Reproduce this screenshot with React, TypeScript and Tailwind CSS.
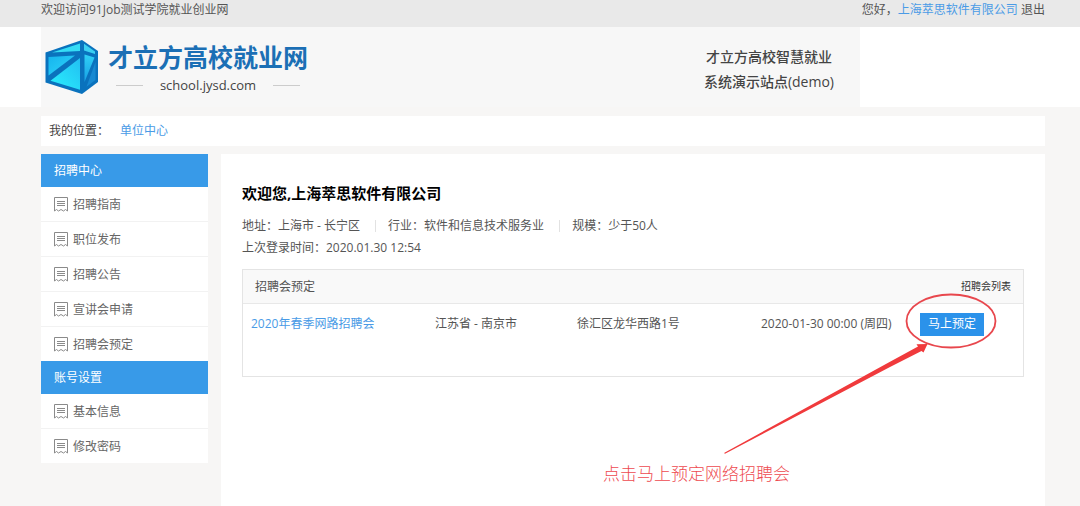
import React from "react";

interface MenuGroup {
  title: string;
  items: string[];
}

interface Fair {
  name: string;
  city: string;
  address: string;
  time: string;
}

const company = "上海萃思软件有限公司";

const menu: MenuGroup[] = [
  { title: "招聘中心", items: ["招聘指南", "职位发布", "招聘公告", "宣讲会申请", "招聘会预定"] },
  { title: "账号设置", items: ["基本信息", "修改密码"] },
];

const fairs: Fair[] = [
  {
    name: "2020年春季网路招聘会",
    city: "江苏省 - 南京市",
    address: "徐汇区龙华西路1号",
    time: "2020-01-30 00:00 (周四)",
  },
];

const CubeLogo: React.FC = () => (
  <svg width="56" height="56" viewBox="0 0 56 56" aria-hidden="true">
    <defs>
      <linearGradient id="cubeLeft" x1="0" y1="0" x2="1" y2="1">
        <stop offset="0" stopColor="#16b4ee" />
        <stop offset="1" stopColor="#2fd6fa" />
      </linearGradient>
      <linearGradient id="cubeFront" x1="0" y1="1" x2="1" y2="0">
        <stop offset="0" stopColor="#2af0fd" />
        <stop offset="1" stopColor="#22bff2" />
      </linearGradient>
      <linearGradient id="cubeSide" x1="0" y1="0" x2="0" y2="1">
        <stop offset="0" stopColor="#2fd0f6" />
        <stop offset="1" stopColor="#18a0e4" />
      </linearGradient>
    </defs>
    <path d="M1.5 13.5 L38 1 L54 12 V43 L38 55 L1.5 43.5 Z" fill="#0a72bd" strokeLinejoin="round" />
    <path d="M8 13.6 L36 4.5 V12 Z" fill="#35dcf5" />
    <path d="M40 4.8 L51 12.6 L51 15 L40 11.6 Z" fill="#3bd0f2" />
    <path d="M4.5 18 L31 16.6 L4.5 36.5 Z" fill="url(#cubeLeft)" />
    <path d="M36 19 V50.8 L6.5 41.8 Z" fill="url(#cubeFront)" />
    <path d="M40.5 15.5 L50.5 18.5 L40.5 43 Z" fill="url(#cubeSide)" />
    <path d="M51.5 23 V41 L42.5 47.8 Z" fill="#1789d2" />
  </svg>
);

const ReceiptIcon: React.FC = () => (
  <svg width="14" height="15" viewBox="0 0 14 15" fill="none" stroke="#8a8a8a" aria-hidden="true">
    <path d="M0.5 14 V0.5 H13.5 V14 L11.5 12.5 L9.5 14 L7 12.5 L4.5 14 L2.5 12.5 Z" />
    <path d="M3 4.5 H11 M3 6.5 H11 M3 8.5 H11" />
  </svg>
);

const TopBar: React.FC = () => (
  <div className="h-[27px] bg-[#e9e9e9] pl-[41px] pr-[35px]">
    <div className="flex justify-between leading-5">
      <span>欢迎访问91Job测试学院就业创业网</span>
      <span>
        您好，
        <a href="#company" className="text-[#4a9be6]">{company}</a>{" "}
        <a href="#logout">退出</a>
      </span>
    </div>
  </div>
);

const Banner: React.FC = () => (
  <header className="bg-white pl-[41px] pr-[35px]">
    <div className="flex h-20 max-w-[819px] items-center justify-between bg-[#f7f7f7] pl-[3px] pr-[26px]">
      <div className="flex items-center gap-2">
        <CubeLogo />
        <div>
          <div className="text-[25px] font-bold leading-8 text-[#1b6fb5]">才立方高校就业网</div>
          <div className="flex items-center justify-between px-2 pt-1 text-[13px] leading-4 text-[#444]">
            <span className="h-px w-[27px] bg-[#ccc]" />
            school.jysd.com
            <span className="h-px w-[27px] bg-[#ccc]" />
          </div>
        </div>
      </div>
      <div className="pt-1 text-center text-sm font-medium leading-[25px] text-[#444]">
        <p>才立方高校智慧就业</p>
        <p>系统演示站点(demo)</p>
      </div>
    </div>
  </header>
);

const Sidebar: React.FC = () => (
  <nav className="w-[167px] shrink-0 self-start bg-white">
    {menu.map((group) => (
      <div key={group.title}>
        <h2 className="bg-[#389ae8] pl-[13px] leading-[33px] text-white">{group.title}</h2>
        <ul>
          {group.items.map((item) => (
            <li key={item} className="border-b border-[#f2f2f2] last:border-0">
              <a href="#menu" className="flex h-[34px] items-center gap-[5px] pl-[13px] pt-px text-[#666]">
                <ReceiptIcon />
                {item}
              </a>
            </li>
          ))}
        </ul>
      </div>
    ))}
  </nav>
);

/* Red circle and arrow that point at the booking button */
const BookingHint: React.FC = () => (
  <div className="pointer-events-none absolute -right-4 -top-[23px] h-[200px] w-[400px]">
    <svg width="400" height="200" viewBox="0 0 400 200" aria-hidden="true">
      <ellipse cx="351" cy="31" rx="44.5" ry="26.5" fill="none" stroke="#e8474d" strokeWidth="1.8" />
      <path
        d="M124 163 L290 71.8 L318 56.6 L316.5 54.2 L327.5 54 L323.5 62.6 L321.5 61 L290 77 L125 163.8 Z"
        fill="#f03a3c"
      />
    </svg>
    <span className="absolute bottom-1 left-[3px] whitespace-nowrap text-[17px] font-light leading-6 text-[#ee4a50]">
      点击马上预定网络招聘会
    </span>
  </div>
);

const FairPanel: React.FC = () => (
  <section className="mt-[10px] border border-[#e4e4e4] pb-8">
    <div className="flex h-[34px] items-center justify-between border-b border-[#e8e8e8] bg-[#f9f9f9] px-3">
      <h3>招聘会预定</h3>
      <a href="#fairs" className="text-[10px] text-[#333]">招聘会列表</a>
    </div>
    <table className="w-full table-fixed text-left">
      <tbody>
        {fairs.map((fair) => (
          <tr key={fair.name} className="h-10">
            <td className="w-[184px] pl-2">
              <a href="#fair" className="text-[#4a9be6]">{fair.name}</a>
            </td>
            <td className="w-[142px] pl-2">{fair.city}</td>
            <td className="w-[184px] pl-2">{fair.address}</td>
            <td className="w-[159px] whitespace-nowrap pl-2">{fair.time}</td>
            <td className="pl-2">
              <div className="relative w-16">
                <button type="button" className="block h-[23px] w-full bg-[#2b92ea] text-white">
                  马上预定
                </button>
                <BookingHint />
              </div>
            </td>
          </tr>
        ))}
      </tbody>
    </table>
  </section>
);

const App: React.FC = () => {
  return (
    <div className="flex min-h-screen flex-col bg-[#f7f6f5] font-['Open_Sans','Noto_Sans_CJK_SC',sans-serif] text-xs text-[#555]">
      <TopBar />
      <Banner />
      <div className="flex flex-1 flex-col pl-[41px] pr-[35px] pt-[9px]">
        <div className="flex h-[30px] items-center gap-[11px] bg-white px-2">
          <span className="text-[#444]">我的位置：</span>
          <a href="#center" className="text-[#4a9be6]">单位中心</a>
        </div>
        <div className="mt-2 flex flex-1 gap-[13px]">
          <Sidebar />
          <main className="min-w-0 flex-1 bg-white px-[21px] pt-7">
            <h1 className="text-[15px] font-bold leading-[22px] text-black">欢迎您,{company}</h1>
            <div className="mt-[11px] flex leading-[22px]">
              <span>地址：上海市 - 长宁区</span>
              <span className="my-[5px] ml-[15px] mr-3 w-px bg-[#e2e2e2]" />
              <span>行业：软件和信息技术服务业</span>
              <span className="my-[5px] ml-[15px] mr-3 w-px bg-[#e2e2e2]" />
              <span>规模：少于50人</span>
            </div>
            <p className="leading-[22px]">上次登录时间：2020.01.30 12:54</p>
            <FairPanel />
          </main>
        </div>
      </div>
    </div>
  );
};

export default App;
